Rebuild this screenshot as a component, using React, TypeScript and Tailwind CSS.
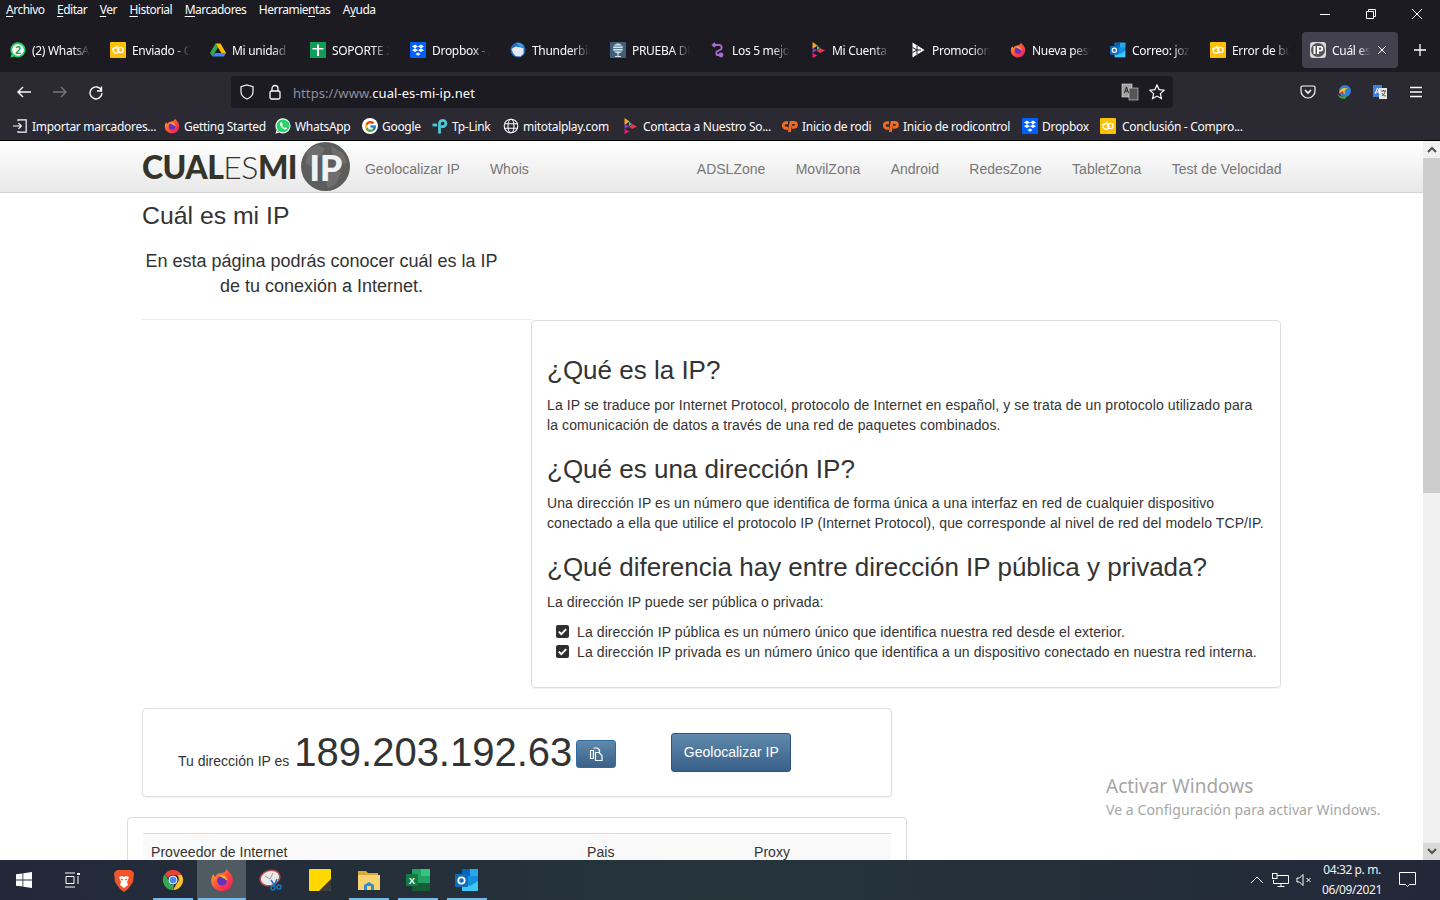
import React from "react";
import { FcGoogle } from "react-icons/fc";

const ui = "font-['Noto_Sans','Open_Sans',sans-serif]";

const Whats = ({ badge }: { badge?: boolean }) => (
  <svg width="16" height="16" viewBox="0 0 16 16">
    <path d="M8 .3a7.600 7.600 0 0 0-6.400 11.600L.4 15.700l3.900-1.100A7.600 7.600 0 1 0 8 .3z" fill={badge ? "#25d366" : "#fff"} />
    {badge ? (
      <circle cx="8" cy="8" r="5.800" fill="#fff" />
    ) : (
      <path d="M8 1.500a6.400 6.400 0 0 0-5.200 10.100l-.7 2.300 2.400-.7A6.400 6.400 0 1 0 8 1.500z" fill="#25d366" />
    )}
    {badge ? (
      <text x="8" y="11.600" textAnchor="middle" fontSize="10.500" fontWeight="700" fill="#129c42" fontFamily="Liberation Sans">2</text>
    ) : (
      <path d="M5.800 4.300c-1 .8-1.200 2.100-.3 3.500 1 1.700 2.400 3 4.200 3.600 1.100.4 2.100-.2 2.300-1.200l-1.700-1.100-.9.800c-1-.4-1.800-1.300-2.300-2.300l.7-.9-1-2.400z" fill="#fff" />
    )}
  </svg>
);
const Yellow = () => (
  <svg width="16" height="16" viewBox="0 0 16 16">
    <rect width="16" height="16" rx="1" fill="#ffc107" />
    <circle cx="6" cy="8.500" r="2.800" fill="none" stroke="#fff" strokeWidth="1.300" />
    <circle cx="10.500" cy="8" r="2.600" fill="none" stroke="#fff" strokeWidth="1.300" />
    <path d="M2 7l6-3" stroke="#fff" strokeWidth="1" />
  </svg>
);
const Drive = () => (
  <svg width="16" height="16" viewBox="0 0 16 16">
    <path d="M5.500 1.500h5L16 11l-2.500 3.500z" fill="#fbbc04" />
    <path d="M5.500 1.500L0 11l2.500 3.500L8 5.500z" fill="#34a853" />
    <path d="M2.500 14.500h11L16 11H5z" fill="#4285f4" />
  </svg>
);
const Soporte = () => (
  <svg width="16" height="16" viewBox="0 0 16 16">
    <rect width="16" height="16" fill="#0f9d58" />
    <path d="M7 2.500h2v3.500h4.500v1.500H9V14H7V7.500H2.500V6H7z" fill="#fff" />
  </svg>
);
const Dropbox = () => (
  <svg width="16" height="16" viewBox="0 0 16 16">
    <rect width="16" height="16" rx="1" fill="#0061fe" />
    <path d="M5 2.500l3 1.900-3 1.900-3-1.900zM11 2.500l3 1.900-3 1.900-3-1.900zM5 6.300l3 1.900-3 1.900-3-1.900zM11 6.300l3 1.900-3 1.900-3-1.900zM8 10.600l2.500 1.500L8 13.800l-2.500-1.700z" fill="#fff" />
  </svg>
);
const Thunder = () => (
  <svg width="16" height="16" viewBox="0 0 16 16">
    <circle cx="8" cy="8" r="7.500" fill="#1f6fc4" />
    <path d="M1.500 7l4-2.500 8 1.500v5.500l-3 3-5-.5-2.500-3z" fill="#e6e9ee" />
    <path d="M6 1c3-1 6.500 0 8.500 3.500L10 5z" fill="#3b9be8" />
  </svg>
);
const Mic = () => (
  <svg width="16" height="16" viewBox="0 0 16 16">
    <rect width="16" height="16" rx="1" fill="#3f5f78" />
    <circle cx="8" cy="6.500" r="5" fill="#cfe0ea" />
    <path d="M2 6.500h12M3.500 4h9M3.500 9h9" stroke="#3f5f78" strokeWidth=".8" />
    <path d="M8 11v3M5 14.500h6" stroke="#cfe0ea" strokeWidth="1.200" />
  </svg>
);
const Purple = () => (
  <svg width="16" height="16" viewBox="0 0 16 16" fill="none" stroke="#a86bd1" strokeWidth="1.800">
    <path d="M3 3h6c3.200 0 3.600 4 .7 5L7 9.500c-1 .8-1 2.500 0 3.500h5.500" />
    <path d="M5 1l-2.200 2L5 5" />
    <circle cx="11" cy="13" r="1.500" />
  </svg>
);
const Play = () => (
  <svg width="16" height="16" viewBox="0 0 16 16">
    <path d="M2.500 0l5 3.500-5 3.500z" fill="#f5a623" />
    <path d="M2.500 6l5 2-5 3z" fill="#7b3fc4" />
    <path d="M2.500 11l5 2.500-5 2.500z" fill="#ec1c6e" />
    <path d="M7 3.500l3 2.500-3 2z" fill="#2ecc71" />
    <path d="M7 9l3-3 5 2.500-5 2.500z" fill="#e8344f" />
  </svg>
);
const PlayW = () => (
  <svg width="16" height="16" viewBox="0 0 16 16">
    <path d="M2.500 .5L14.500 8 2.500 15.500z" fill="#fff" />
    <path d="M2.500 5.500L7 8 2.500 10.500M7 3.500V12.500M7 8h4" fill="none" stroke="#1c1b22" strokeWidth="1" />
  </svg>
);
const Firefox = ({ s = 16 }: { s?: number }) => (
  <svg width={s} height={s} viewBox="0 0 32 32">
    <defs>
      <linearGradient id="ff" x1="0" y1="0" x2="1" y2="1">
        <stop offset="0" stopColor="#ffb81c" />
        <stop offset=".5" stopColor="#ff4f3b" />
        <stop offset="1" stopColor="#e3146f" />
      </linearGradient>
    </defs>
    <path d="M22 1c1 3 5 5 7 9 3 6 1 14-4 18-6 4-15 4-20-2C0 21 1 12 5 8c0 2 1 3 2 4 1-3 4-5 7-5 3 0 8-2 8-6z" fill="url(#ff)" />
    <circle cx="16" cy="17" r="6.500" fill="#6b2fc0" />
    <path d="M12 10c5-2 11 1 11 7l-4-3c-2-1-5-2-7-4z" fill="#ffb81c" />
  </svg>
);
const Outlook = ({ s = 16 }: { s?: number }) => (
  <svg width={s} height={s} viewBox="0 0 24 24">
    <rect x="7" y="1" width="16" height="22" rx="1" fill="#1490df" />
    <rect x="7" y="1" width="8" height="7" fill="#0364b8" />
    <rect x="15" y="1" width="8" height="7" fill="#28a8ea" />
    <path d="M7 13l8 5 8-5v9a1 1 0 0 1-1 1H8a1 1 0 0 1-1-1z" fill="#50d9ff" opacity=".75" />
    <rect x="0" y="6" width="13" height="13" rx="1" fill="#0f6cbd" />
    <circle cx="6.500" cy="12.500" r="3.200" fill="none" stroke="#fff" strokeWidth="1.800" />
  </svg>
);
const IpFav = () => (
  <svg width="16" height="16" viewBox="0 0 16 16">
    <rect width="16" height="16" rx="3" fill="#d9d9d9" />
    <circle cx="8" cy="8" r="7" fill="#555" />
    <path d="M3.500 4h2v8h-2zM7 4h3.500a2.600 2.600 0 0 1 0 5.400H9V12H7zM9 5.600v2.200h1.300a1.100 1.100 0 0 0 0-2.200z" fill="#fff" />
  </svg>
);
const Import = () => (
  <svg width="16" height="16" viewBox="0 0 16 16" fill="none" stroke="#fbfbfe" strokeWidth="1.200">
    <path d="M6 3V1.800h8.200v12.400H6V13" />
    <path d="M1 8h8M6.500 5.200L9.300 8l-2.800 2.800" />
  </svg>
);
const TpLink = () => (
  <svg width="16" height="16" viewBox="0 0 16 16" fill="none" stroke="#4acbd6" strokeWidth="2.800">
    <path d="M7.500 15.500V5.500a3.200 3.200 0 1 1 3.200 3.200H9" />
    <path d="M.5 7H5" />
  </svg>
);
const Globe = () => (
  <svg width="16" height="16" viewBox="0 0 16 16" fill="none" stroke="#fbfbfe" strokeWidth="1.100">
    <circle cx="8" cy="8" r="6.800" />
    <ellipse cx="8" cy="8" rx="3" ry="6.800" />
    <path d="M1.500 5.800h13M1.500 10.200h13" />
  </svg>
);
const Cp = () => (
  <svg width="16" height="16" viewBox="0 0 16 16" fill="none" stroke="#f26a21" strokeWidth="3">
    <path d="M6 4.800H4a2.600 2.600 0 0 0 0 5.400h2" />
    <path d="M7.300 14l1.700-9.500h3a2.300 2.300 0 0 1 0 4.700h-2" />
  </svg>
);
const GoogleFav = () => (
  <span className="flex h-4 w-4 items-center justify-center rounded-full bg-white">
    <FcGoogle size={13} />
  </span>
);

const tabs: [React.ReactNode, string][] = [
  [<Whats badge />, "(2) WhatsApp"],
  [<Yellow />, "Enviado - Correo"],
  [<Drive />, "Mi unidad - Google"],
  [<Soporte />, "SOPORTE 2021"],
  [<Dropbox />, "Dropbox - Archivos"],
  [<Thunder />, "Thunderbird Mail"],
  [<Mic />, "PRUEBA DE VOZ"],
  [<Purple />, "Los 5 mejores"],
  [<Play />, "Mi Cuenta total"],
  [<PlayW />, "Promociones de"],
  [<Firefox />, "Nueva pestaña"],
  [<Outlook />, "Correo: jozafat"],
  [<Yellow />, "Error de búsqueda"],
];

const marks: [React.ReactNode, string, string, string][] = [
  [<Import />, "Importar marcadores...", "w-[152px]", "mr-[4px]"],
  [<Firefox />, "Getting Started", "w-[111px]", "mr-[4px]"],
  [<Whats />, "WhatsApp", "w-[87px]", "mr-[4px]"],
  [<GoogleFav />, "Google", "w-[70px]", "mr-[4px]"],
  [<TpLink />, "Tp-Link", "w-[71px]", "mr-[4px]"],
  [<Globe />, "mitotalplay.com", "w-[119px]", "mr-[4px]"],
  [<Play />, "Contacta a Nuestro So...", "w-[160px]", "mr-[5px]"],
  [<Cp />, "Inicio de rodi", "w-[101px]", "mr-[4px]"],
  [<Cp />, "Inicio de rodicontrol", "w-[139px]", "mr-[4px]"],
  [<Dropbox />, "Dropbox", "w-[78px]", "mr-[4px]"],
  [<Yellow />, "Conclusión - Compro...", "w-[160px]", "mr-[6px]"],
];

const Underlined = ({ a, u, b }: { a?: string; u: string; b?: string }) => (
  <span>
    {a}
    <span className="underline underline-offset-2">{u}</span>
    {b}
  </span>
);

const Check = () => (
  <svg width="13" height="13" viewBox="0 0 13 13" className="mb-[2px] shrink-0">
    <rect width="13" height="13" rx="2" fill="#2f2f2f" />
    <path d="M2.800 6.600l2.500 2.500 4.900-5" fill="none" stroke="#fff" strokeWidth="2" />
  </svg>
);

const IpLogoCircle = () => (
  <div className="relative flex h-[49px] w-[49px] shrink-0 items-center justify-center overflow-hidden rounded-full bg-[#5d5d5d]">
    <svg width="49" height="49" viewBox="0 0 49 49" className="absolute inset-0">
      <path d="M6 8l10-5 8 3-4 8-7 3-2 8-6-3zM30 4l12 7 4 10-8 1-6-8zM24 30l10-3 6 4-6 12-7 3-3-9z" fill="#6e6e6e" />
    </svg>
    <span className="relative font-['Lato',sans-serif] text-[36px] leading-none font-black tracking-[-0.5px] text-[#f2f2f2]">IP</span>
  </div>
);

const Tray = () => (
  <div className="ml-auto flex h-full items-center text-[#f2f2f2]">
    <svg width="14" height="14" viewBox="0 0 14 14" fill="none" stroke="#fff" className="mr-[8px]">
      <path d="M1 10l6-6 6 6" />
    </svg>
    <svg width="17" height="15" viewBox="0 0 17 15" fill="none" stroke="#fff" className="mr-[7px]">
      <path d="M5 2.500h11.500v8H1.500V7M9 10.500v3M5.500 13.500h7" />
      <rect x=".5" y=".5" width="4.500" height="5" />
    </svg>
    <svg width="16" height="14" viewBox="0 0 16 14" fill="none" stroke="#fff" className="mr-[9px]">
      <path d="M1 5h2.500L7 1.500v11L3.500 9H1z" />
      <path d="M10.500 5l4 4M14.500 5l-4 4" />
    </svg>
    <div className={`${ui} w-[62px] text-center text-[12px] leading-[20px] tracking-[-0.4px]`}>
      <div>04:32 p. m.</div>
      <div>06/09/2021</div>
    </div>
    <svg width="17" height="16" viewBox="0 0 17 16" fill="none" stroke="#fff" className="mr-[24px] ml-[16px]">
      <path d="M.5 .5h16v12h-6l-2 2-2-2h-6z" />
    </svg>
  </div>
);

const Task = ({ children, on, active, w = "w-[49px]" }: { children: React.ReactNode; on?: string; active?: boolean; w?: string }) => (
  <div className={`relative flex h-10 items-center justify-center ${w} ${active ? "bg-[#4f5b60]" : ""}`}>
    {children}
    {on && <div className={`absolute bottom-0 left-1/2 h-[2px] -translate-x-1/2 bg-[#76b9ed] ${on}`} />}
  </div>
);

export default function App() {
  return (
    <div className="relative flex h-[900px] w-[1440px] flex-col overflow-hidden bg-white font-['Liberation_Sans',Arial,sans-serif]">
      {/* Title + menu */}
      <div className={`${ui} flex h-[30px] shrink-0 bg-[#1c1b22] text-[12px] text-[#fbfbfe]`}>
        <div className="flex h-5 items-center gap-[12.5px] pl-[6px] tracking-[-0.5px]">
          <Underlined u="A" b="rchivo" />
          <Underlined u="E" b="ditar" />
          <Underlined u="V" b="er" />
          <Underlined u="H" b="istorial" />
          <Underlined u="M" b="arcadores" />
          <Underlined a="Herramie" u="n" b="tas" />
          <Underlined a="A" u="y" b="uda" />
        </div>
        <div className="ml-auto flex items-start">
          <div className="flex h-[28px] w-[46px] items-center justify-center">
            <div className="h-px w-[10px] bg-white" />
          </div>
          <div className="flex h-[28px] w-[46px] items-center justify-center">
            <svg width="10" height="10" viewBox="0 0 10 10" fill="none" stroke="#fff">
              <path d="M2.500 2.500V.5h7v7h-2M.5 2.500h7v7h-7z" />
            </svg>
          </div>
          <div className="flex h-[28px] w-[46px] items-center justify-center">
            <svg width="10" height="10" viewBox="0 0 10 10" stroke="#fff">
              <path d="M0 0l10 10M10 0L0 10" />
            </svg>
          </div>
        </div>
      </div>

      {/* Tabs */}
      <div className={`${ui} flex h-[42px] shrink-0 items-start bg-[#1c1b22] pt-[2px] text-[12px] tracking-[-0.3px] text-[#fbfbfe]`}>
        {tabs.map(([icon, t], i) => (
          <div key={i} className="flex h-9 w-[100px] shrink-0 items-center pl-[10px]">
            <span className="mr-[6px] shrink-0">{icon}</span>
            <span className="mt-[1px] w-[58px] overflow-hidden whitespace-nowrap [mask-image:linear-gradient(to_right,black_70%,transparent)]">{t}</span>
          </div>
        ))}
        <div className="mx-[2px] flex h-9 w-[96px] shrink-0 items-center rounded-[4px] bg-[#42414d] pl-[8px]">
          <span className="mr-[6px] shrink-0">
            <IpFav />
          </span>
          <span className="mt-[1px] w-[38px] overflow-hidden whitespace-nowrap [mask-image:linear-gradient(to_right,black_70%,transparent)]">Cuál es mi IP</span>
          <svg width="10" height="10" viewBox="0 0 10 10" stroke="#fff" className="ml-[7px]">
            <path d="M1 1l8 8M9 1L1 9" />
          </svg>
        </div>
        <div className="flex h-9 w-[40px] items-center justify-center">
          <svg width="12" height="12" viewBox="0 0 12 12" stroke="#fff" strokeWidth="1.300">
            <path d="M6 0v12M0 6h12" />
          </svg>
        </div>
      </div>

      {/* URL bar */}
      <div className={`${ui} flex h-10 shrink-0 items-center bg-[#2b2a33] text-[#fbfbfe]`}>
        <div className="flex w-[231px] items-center pl-[16px]">
          <svg width="16" height="16" viewBox="0 0 16 16" fill="none" stroke="#fbfbfe" strokeWidth="1.400">
            <path d="M15 8H2M7 3L2 8l5 5" />
          </svg>
          <svg width="16" height="16" viewBox="0 0 16 16" fill="none" stroke="#77767d" strokeWidth="1.400" className="ml-[20px]">
            <path d="M1 8h13M9 3l5 5-5 5" />
          </svg>
          <svg width="16" height="16" viewBox="0 0 16 16" fill="none" stroke="#fbfbfe" strokeWidth="1.400" className="ml-[20px]">
            <path d="M13.500 2.500V7H9M13.500 6.500A6 6 0 1 0 14 9" />
          </svg>
        </div>
        <div className="flex h-8 w-[942px] items-center rounded-[4px] bg-[#1c1b22] pl-[8px]">
          <svg width="16" height="16" viewBox="0 0 16 16" fill="none" stroke="#fbfbfe" strokeWidth="1.200">
            <path d="M8 1l6 1.800v5c0 3.400-2.600 5.900-6 7.200-3.400-1.300-6-3.800-6-7.200v-5z" />
          </svg>
          <svg width="16" height="16" viewBox="0 0 16 16" fill="none" stroke="#fbfbfe" strokeWidth="1.300" className="ml-[12px]">
            <rect x="3" y="7" width="10" height="8" rx="1.500" />
            <path d="M5 7V4.500a3 3 0 0 1 6 0V7" />
          </svg>
          <span className="mt-[3px] ml-[10px] text-[13px] tracking-[0.07px] text-[#fbfbfe]">
            <span className="text-[#8f8f9d]">https://www.</span>cual-es-mi-ip.net
          </span>
          <svg width="18" height="18" viewBox="0 0 18 18" className="mr-[10px] ml-auto">
            <rect x="1" y="1" width="10" height="13" fill="#a0a0a0" stroke="#ddd" strokeWidth=".6" />
            <rect x="8" y="5" width="9" height="12" fill="#555" stroke="#ddd" strokeWidth=".6" />
            <path d="M3.500 10l2-6 2 6M4.300 8h2.400" fill="none" stroke="#222" strokeWidth="1" />
          </svg>
          <svg width="16" height="16" viewBox="0 0 16 16" fill="none" stroke="#fbfbfe" strokeWidth="1.200" className="mr-[8px]">
            <path d="M8 1l2.100 4.600 5 .6-3.700 3.400 1 5L8 12.100 3.600 14.600l1-5L.9 6.200l5-.6z" />
          </svg>
        </div>
        <div className="flex flex-1 items-center pl-[127px]">
          <svg width="16" height="16" viewBox="0 0 16 16" fill="none" stroke="#fbfbfe" strokeWidth="1.200">
            <path d="M2.500 2h11A1.500 1.500 0 0 1 15 3.500V7a7 7 0 0 1-14 0V3.500A1.500 1.500 0 0 1 2.500 2z" />
            <path d="M5 6l3 3 3-3" strokeWidth="1.600" />
          </svg>
          <svg width="16" height="16" viewBox="0 0 16 16" className="ml-[20px]">
            <circle cx="9" cy="7" r="6" fill="#2f7fd6" />
            <path d="M3 9c1-5 6-6 9-4-3 0-4 2-3 5z" fill="#f2c230" />
            <path d="M1 10c3 3 7 3 10 1l-2 4-5-1z" fill="#44a742" />
            <path d="M3 9l4-2 1 3z" fill="#d6372c" />
          </svg>
          <svg width="16" height="16" viewBox="0 0 16 16" className="ml-[20px]">
            <rect x="1" y="1" width="9" height="12" fill="#3f7fe0" />
            <rect x="7" y="4" width="8" height="11" fill="#e8e8e8" />
            <path d="M3 10l2.500-6L8 10M3.800 8h3.400" fill="none" stroke="#fff" strokeWidth="1" />
            <path d="M9 7h5M11.500 6v1M10 12c2-1 3-3 3-5M10 9c1 2 2 3 4 3" fill="none" stroke="#333" strokeWidth=".8" />
          </svg>
          <svg width="14" height="12" viewBox="0 0 14 12" stroke="#fbfbfe" strokeWidth="1.300" className="ml-[21px]">
            <path d="M1 1.500h12M1 6h12M1 10.500h12" />
          </svg>
        </div>
      </div>

      {/* Bookmarks */}
      <div className={`${ui} flex h-[29px] shrink-0 items-center border-b border-black bg-[#2b2a33] pl-[12px] text-[12px] tracking-[-0.3px] text-[#fbfbfe]`}>
        {marks.map(([icon, t, w, gap], i) => (
          <div key={i} className={`flex shrink-0 items-center ${w}`}>
            <span className={`shrink-0 ${gap}`}>{icon}</span>
            <span className="mt-[2px] whitespace-nowrap">{t}</span>
          </div>
        ))}
      </div>

      {/* Page */}
      <div className="flex h-[719px] shrink-0 overflow-hidden">
        <div className="min-w-0 flex-1 overflow-hidden text-[#333]">
          <nav className="h-[52px] border-b border-[#d5d5d5] bg-gradient-to-b from-white to-[#e8e8e8]">
            <div className="flex h-full items-center pl-[142px] text-[14px] text-[#777]">
              <div className="flex items-center font-['Lato',sans-serif] text-[32px] leading-none tracking-[-0.55px] text-[#35332a]">
                <span className="font-black">CUAL</span>
                <span className="font-light">ES</span>
                <span className="font-black">MI</span>
              </div>
              <div className="ml-[4px]">
                <IpLogoCircle />
              </div>
              <a className="mt-[6px] ml-[15px]">Geolocalizar IP</a>
              <a className="mt-[6px] ml-[30px]">Whois</a>
              <div className="mt-[6px] ml-[168px] flex gap-[30.4px]">
                <a>ADSLZone</a>
                <a>MovilZona</a>
                <a>Android</a>
                <a>RedesZone</a>
                <a>TabletZona</a>
                <a>Test de Velocidad</a>
              </div>
            </div>
          </nav>

          <div className="ml-[142px] w-[1139px]">
            <h1 className="mt-[9px] text-[24.8px] leading-[27px]">Cuál es mi IP</h1>
            <p className="mt-[20px] w-[359px] text-center text-[18px] leading-[25px]">
              En esta página podrás conocer cuál es la IP de tu conexión a Internet.
            </p>
            <div className="mt-[20px] h-px w-[390px] bg-[#eee]" />
            <div className="flex justify-end">
              <div className="h-[368px] w-[750px] rounded-[4px] border border-[#ddd] px-[15px] pt-[20px] shadow-[0_1px_1px_rgba(0,0,0,0.05)]">
                <h2 className="text-[26px] leading-[59px]">¿Qué es la IP?</h2>
                <p className="mt-[-5px] text-[14px] leading-[20px] tracking-[0.1px]">
                  La IP se traduce por Internet Protocol, protocolo de Internet en español, y se trata de un protocolo utilizado para la comunicación de datos a través de una red de paquetes combinados.
                </p>
                <h2 className="mt-[5px] text-[26px] leading-[59px]">¿Qué es una dirección IP?</h2>
                <p className="mt-[-6px] text-[14px] leading-[20px] tracking-[0.1px]">
                  Una dirección IP es un número que identifica de forma única a una interfaz en red de cualquier dispositivo conectado a ella que utilice el protocolo IP (Internet Protocol), que corresponde al nivel de red del modelo TCP/IP.
                </p>
                <h2 className="mt-[5px] text-[26px] leading-[59px]">¿Qué diferencia hay entre dirección IP pública y privada?</h2>
                <p className="mt-[-5px] text-[14px] leading-[20px] tracking-[0.1px]">La dirección IP puede ser pública o privada:</p>
                <ul className="mt-[10px] pl-[9px] text-[14px] leading-[20px] tracking-[0.1px]">
                  <li className="flex items-center gap-[8px]">
                    <Check />
                    La dirección IP pública es un número único que identifica nuestra red desde el exterior.
                  </li>
                  <li className="flex items-center gap-[8px]">
                    <Check />
                    La dirección IP privada es un número único que identifica a un dispositivo conectado en nuestra red interna.
                  </li>
                </ul>
              </div>
            </div>

            <div className="mt-[20px] flex h-[89px] w-[750px] items-center rounded-[4px] border border-[#ddd] pl-[35px] shadow-[0_1px_1px_rgba(0,0,0,0.05)]">
              <span className="mt-[18px] text-[14px]">Tu dirección IP es</span>
              <span className="mb-[2px] ml-[5px] text-[40px] leading-none">189.203.192.63</span>
              <div className="mt-[2px] ml-[4px] flex h-[28px] w-[40px] items-center justify-center rounded-[3px] border border-[#2e6da4] bg-gradient-to-b from-[#5f89ad] to-[#3a6189]">
                <svg width="14" height="14" viewBox="0 0 14 14" fill="none" stroke="#fff" strokeWidth="1.200">
                  <path d="M4.500 1h4l2 2v2.500M1.500 3.500h3l-.2 8H1.500zM6.500 5.500h3.500l3 3V13.500H6.500z" />
                </svg>
              </div>
              <div className="ml-[55px] flex h-[39px] w-[120px] items-center justify-center rounded-[3px] border border-[#2b557f] bg-gradient-to-b from-[#5f89ad] to-[#3a6189] text-[14px] text-white">
                Geolocalizar IP
              </div>
            </div>

            <div className="mt-[20px] ml-[-15px] h-[80px] w-[780px] rounded-[4px] border border-[#ddd] px-[15px] pt-[15px]">
              <div className="flex h-[40px] border-t border-[#ddd] bg-[#f9f9f9] pt-[8px] pl-[8px] text-[14px] tracking-[0.05px]">
                <span className="w-[436px]">Proveedor de Internet</span>
                <span className="w-[167px]">Pais</span>
                <span>Proxy</span>
              </div>
            </div>
          </div>
        </div>

        {/* Scrollbar */}
        <div className="flex w-[17px] shrink-0 flex-col bg-[#f0f0f0]">
          <div className="flex h-[17px] items-center justify-center">
            <svg width="10" height="7" viewBox="0 0 10 7" fill="none" stroke="#505050" strokeWidth="2">
              <path d="M1 6l4-4 4 4" />
            </svg>
          </div>
          <div className="h-[335px] bg-[#cdcdcd]" />
          <div className="mt-auto flex h-[17px] items-center justify-center bg-[#dadada]">
            <svg width="10" height="7" viewBox="0 0 10 7" fill="none" stroke="#505050" strokeWidth="2">
              <path d="M1 1l4 4 4-4" />
            </svg>
          </div>
        </div>
      </div>

      {/* Taskbar */}
      <div className="flex h-10 shrink-0 items-center bg-gradient-to-r from-[#232839] via-[#25353a] to-[#232839]">
        <Task w="w-[48px]">
          <svg width="16" height="16" viewBox="0 0 16 16" fill="#fff">
            <path d="M0 2.300l6.500-.9v6.200H0zM7.300 1.300L16 0v7.600H7.300zM0 8.400h6.500v6.200L0 13.700zM7.300 8.400H16V16l-8.700-1.300z" />
          </svg>
        </Task>
        <Task w="w-[48px]">
          <svg width="16" height="16" viewBox="0 0 16 16" fill="none" stroke="#fff">
            <path d="M1 1h10M1 15h10M2 4.500h8v7H2zM14 4v8" />
            <rect x="13" y="1" width="3" height="2" fill="#fff" stroke="none" />
          </svg>
        </Task>
        <div className="w-[3px]" />
        <Task>
          <svg width="20" height="23" viewBox="0 0 20 23">
            <path d="M3 1h14l3 3-1 9-5 7-4 3-4-3-5-7-1-9z" fill="#f1562b" />
            <path d="M5 8l3-1 2 1 2-1 3 1-2 5 1 3-4 3-4-3 1-3z" fill="#fff" />
            <path d="M7 10l2 1M13 10l-2 1" stroke="#f1562b" strokeWidth="1.200" />
          </svg>
        </Task>
        <Task on="w-[40px]">
          <svg width="22" height="22" viewBox="0 0 22 22">
            <path d="M11 1a10 10 0 0 1 8.700 5H11a5 5 0 0 0-4.700 3.300L2.900 5A10 10 0 0 1 11 1z" fill="#ea4335" />
            <path d="M19.700 6A10 10 0 0 1 11 21l4.300-7.500A5 5 0 0 0 15 6z" fill="#fbc02d" />
            <path d="M11 21A10 10 0 0 1 2.900 5l4.400 7.600A5 5 0 0 0 12 16z" fill="#34a853" />
            <circle cx="11" cy="11" r="4" fill="#4a8af4" stroke="#fff" />
          </svg>
        </Task>
        <Task active on="w-[48px]">
          <Firefox s={24} />
        </Task>
        <Task>
          <svg width="24" height="22" viewBox="0 0 24 22">
            <ellipse cx="11" cy="9" rx="10" ry="7.500" fill="#e9e9e9" stroke="#b84a4a" strokeWidth="1.500" transform="rotate(-18 11 9)" />
            <path d="M6 7l5 3 3-6" fill="none" stroke="#999" />
            <path d="M12 11l4 6M18 10l-3 7" stroke="#1479c4" strokeWidth="1.500" />
            <circle cx="14" cy="19" r="2" fill="none" stroke="#1479c4" strokeWidth="1.500" />
            <circle cx="20" cy="18" r="2" fill="none" stroke="#1479c4" strokeWidth="1.500" />
          </svg>
        </Task>
        <Task>
          <svg width="22" height="22" viewBox="0 0 22 22">
            <rect width="22" height="22" rx="1" fill="#ffd800" />
            <path d="M10 22L22 10v11a1 1 0 0 1-1 1z" fill="#3d3d3d" />
          </svg>
        </Task>
        <Task on="w-[40px]">
          <svg width="22" height="20" viewBox="0 0 22 20">
            <path d="M0 1h8l2 2h10v4H0z" fill="#d9a93a" />
            <rect x="0" y="5" width="22" height="15" fill="#f8d470" />
            <path d="M6 20v-5l5-3 5 3v5z" fill="#2a8fd8" />
            <rect x="9" y="16" width="4" height="4" fill="#f8d470" />
          </svg>
        </Task>
        <Task on="w-[40px]">
          <svg width="24" height="22" viewBox="0 0 24 22">
            <rect x="6" y="0" width="18" height="22" rx="1" fill="#21a366" />
            <rect x="15" y="0" width="9" height="7" fill="#33c481" />
            <rect x="6" y="14" width="18" height="8" fill="#185c37" />
            <rect x="0" y="5" width="12" height="12" rx="1" fill="#107c41" />
            <text x="6" y="14.500" textAnchor="middle" fontSize="9.500" fontWeight="700" fill="#fff" fontFamily="Liberation Sans">X</text>
          </svg>
        </Task>
        <Task on="w-[40px]">
          <Outlook s={24} />
        </Task>
        <Tray />
      </div>

      {/* Windows watermark over page */}
      <div className={`${ui} pointer-events-none absolute top-[773px] left-[1106px] text-[#a6a6a6]`}>
        <div className="text-[19px] leading-[27px]">Activar Windows</div>
        <div className="text-[14px] leading-[20px] tracking-[0.07px]">Ve a Configuración para activar Windows.</div>
      </div>
    </div>
  );
}
